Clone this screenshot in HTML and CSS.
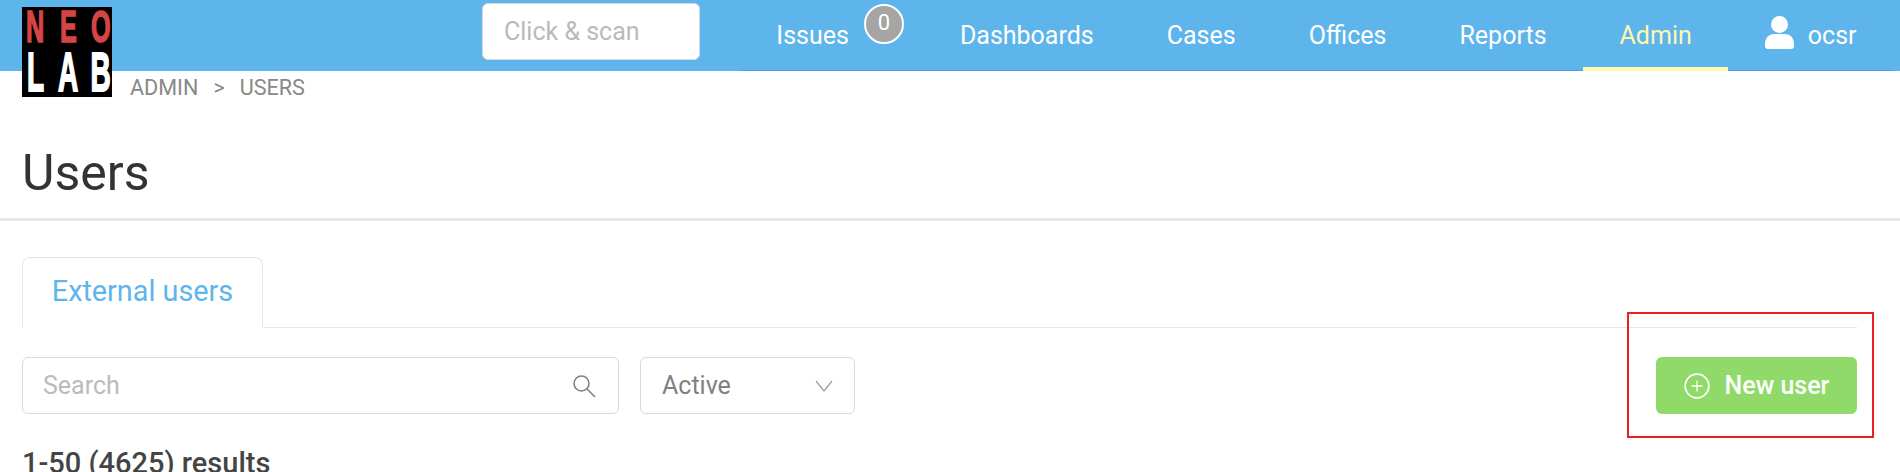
FILE: index.html
```html
<!DOCTYPE html>
<html lang="en">

<head>
    <meta charset="UTF-8">
    <meta name="viewport" content="width=device-width, initial-scale=1.0">
    <title>Users</title>
    <link rel="stylesheet" href="styles.css">
</head>

<body>
    <header class="topbar">
        <div class="logo">
            <div class="logo-row logo-neo"><span>N</span><span>E</span><span>O</span></div>
            <div class="logo-row logo-lab"><span>L</span><span>A</span><span>B</span></div>
        </div>
        <div class="scan">Click &amp; scan</div>
        <nav class="nav">
            <a href="#" class="nav-item nav-issues">Issues<span class="badge">0</span></a>
            <a href="#" class="nav-item">Dashboards</a>
            <a href="#" class="nav-item">Cases</a>
            <a href="#" class="nav-item">Offices</a>
            <a href="#" class="nav-item">Reports</a>
            <a href="#" class="nav-item active">Admin</a>
            <a href="#" class="nav-item nav-user">
                <svg class="user-icon" width="29" height="33" viewBox="0 0 29 33">
                    <circle cx="14.5" cy="8.5" r="8.5" fill="#fff" />
                    <path d="M0 28c0-6 4-10 9-10h11c5 0 9 4 9 10v2c0 2-1 3-3 3H3c-2 0-3-1-3-3z" fill="#fff" />
                </svg>
                ocsr
            </a>
        </nav>
    </header>

    <div class="breadcrumb"><span>ADMIN</span><span class="sep">&gt;</span><span>USERS</span></div>
    <h1 class="title">Users</h1>

    <main class="content">
        <div class="tabs">
            <a href="#" class="tab">External users</a>
        </div>
        <div class="toolbar">
            <div class="search">
                <span>Search</span>
                <svg width="24" height="24" viewBox="0 0 24 24" fill="none" stroke="#808080" stroke-width="1.6">
                    <circle cx="9.5" cy="9.5" r="7.5" />
                    <path d="M15 15l8 8" />
                </svg>
            </div>
            <div class="select">
                <span>Active</span>
                <svg width="18" height="12" viewBox="0 0 18 12" fill="none" stroke="#a0a0a0" stroke-width="1.3">
                    <path d="M1 1l8 10 8-10" />
                </svg>
            </div>
            <div class="button-wrap">
                <button class="add">
                    <svg width="26" height="26" viewBox="0 0 26 26" fill="none" stroke="#fff">
                        <circle cx="13" cy="13" r="11.8" stroke-width="1.7" />
                        <path d="M13 7.5v11M7.5 13h11" stroke-width="1.3" />
                    </svg>
                    New user
                </button>
            </div>
        </div>
        <p class="results">1-50 (4625) results</p>
    </main>
</body>

</html>
```

FILE: styles.css
```css
* {
    margin: 0;
    padding: 0;
    box-sizing: border-box;
    text-decoration: none;
}

body {
    height: 472px;
    overflow: hidden;
    background: #fff;
    font-family: Roboto, "Liberation Sans", sans-serif;
    color: #333;
}

.topbar {
    position: relative;
    height: 71px;
    padding: 3px 7px 0 482px;
    display: flex;
    background: #5eb5ec;
}

.logo {
    position: absolute;
    left: 22px;
    top: 7px;
    width: 90px;
    height: 90px;
    padding-left: 2px;
    background: #000;
    font-family: "Liberation Sans", sans-serif;
    font-size: 28px;
    font-weight: 700;
    line-height: 20px;
}

.logo-row {
    display: grid;
    grid-template-columns: repeat(3, 32.5px);
    justify-content: center;
    align-items: center;
    justify-items: center;
}

.logo-neo {
    height: 32px;
    margin-top: 5px;
    color: #d64545;
}

.logo-lab {
    height: 40px;
    margin-top: 9px;
    color: #fff;
}

.logo-row span {
    height: 20px;
    -webkit-text-stroke: 1px currentColor;
}

.logo-neo span {
    transform: scale(0.9, 1.6);
}

.logo-lab span {
    transform: scale(1, 2);
}

.scan {
    width: 218px;
    height: 57px;
    padding-left: 21px;
    border: 1px solid #d9d9d9;
    border-radius: 6px;
    background: #fff;
    color: #bdb9b5;
    font-size: 25px;
    line-height: 55px;
}

.nav {
    margin-left: auto;
    margin-top: -3px;
    display: flex;
    border-bottom: 1px solid #4f9fd8;
}

.nav-item {
    position: relative;
    height: 71px;
    padding: 22px 36.5px 0;
    color: #fff;
    font-size: 25px;
    line-height: 28px;
}

.nav-issues {
    margin-right: 38px;
}

.badge {
    position: absolute;
    left: 124px;
    top: 4px;
    width: 40px;
    height: 40px;
    border: 2px solid #fff;
    border-radius: 50%;
    background: #a5a5a5;
    text-align: center;
    font-size: 22px;
    line-height: 34px;
}

.active {
    color: #fdf8b0;
    border-bottom: 4px solid #fdf8b0;
}

.nav-user {
    display: flex;
    align-items: flex-start;
    gap: 14px;
}

.user-icon {
    margin-top: -6px;
}

.breadcrumb {
    display: flex;
    gap: 15px;
    padding: 6px 0 0 130px;
    color: #888;
    font-size: 21.6px;
    line-height: 22px;
}

.title {
    height: 89px;
    margin-top: 33px;
    padding: 11px 0 0 22px;
    border-bottom: 3px solid #e7e7e7;
    font-size: 50px;
    font-weight: 400;
    line-height: 60px;
}

.content {
    padding: 36px 43px 0 22px;
}

.tabs {
    height: 71px;
    border-bottom: 1px solid #e7e7e7;
}

.tab {
    display: block;
    width: 241px;
    height: 71px;
    border: 1px solid #e7e7e7;
    border-bottom: 1px solid #fff;
    border-radius: 8px 8px 0 0;
    background: #fff;
    color: #5eb5ec;
    font-size: 28.8px;
    line-height: 66px;
    text-align: center;
}

.toolbar {
    margin-top: 29px;
    display: flex;
    gap: 21px;
}

.search,
.select {
    height: 57px;
    display: flex;
    align-items: center;
    justify-content: space-between;
    border: 1px solid #d9d9d9;
    border-radius: 6px;
    font-size: 25px;
}

.search {
    width: 597px;
    padding: 0 22px 0 20px;
    color: #bbb;
}

.select {
    width: 215px;
    padding: 0 21px 0 21px;
    color: #808080;
}

.button-wrap {
    position: relative;
    margin-left: auto;
}

.button-wrap::after {
    content: "";
    position: absolute;
    left: -29px;
    right: -17px;
    top: -45px;
    bottom: -24px;
    border: 2px solid #e82020;
}

.add {
    width: 201px;
    height: 57px;
    display: flex;
    align-items: center;
    justify-content: center;
    gap: 15px;
    border: 0;
    border-radius: 6px;
    background: #90da69;
    color: #fff;
    font-family: inherit;
    font-size: 25px;
    font-weight: 500;
}

.results {
    margin-top: 33px;
    color: #444;
    font-size: 29px;
    font-weight: 500;
    line-height: 32px;
}
```
